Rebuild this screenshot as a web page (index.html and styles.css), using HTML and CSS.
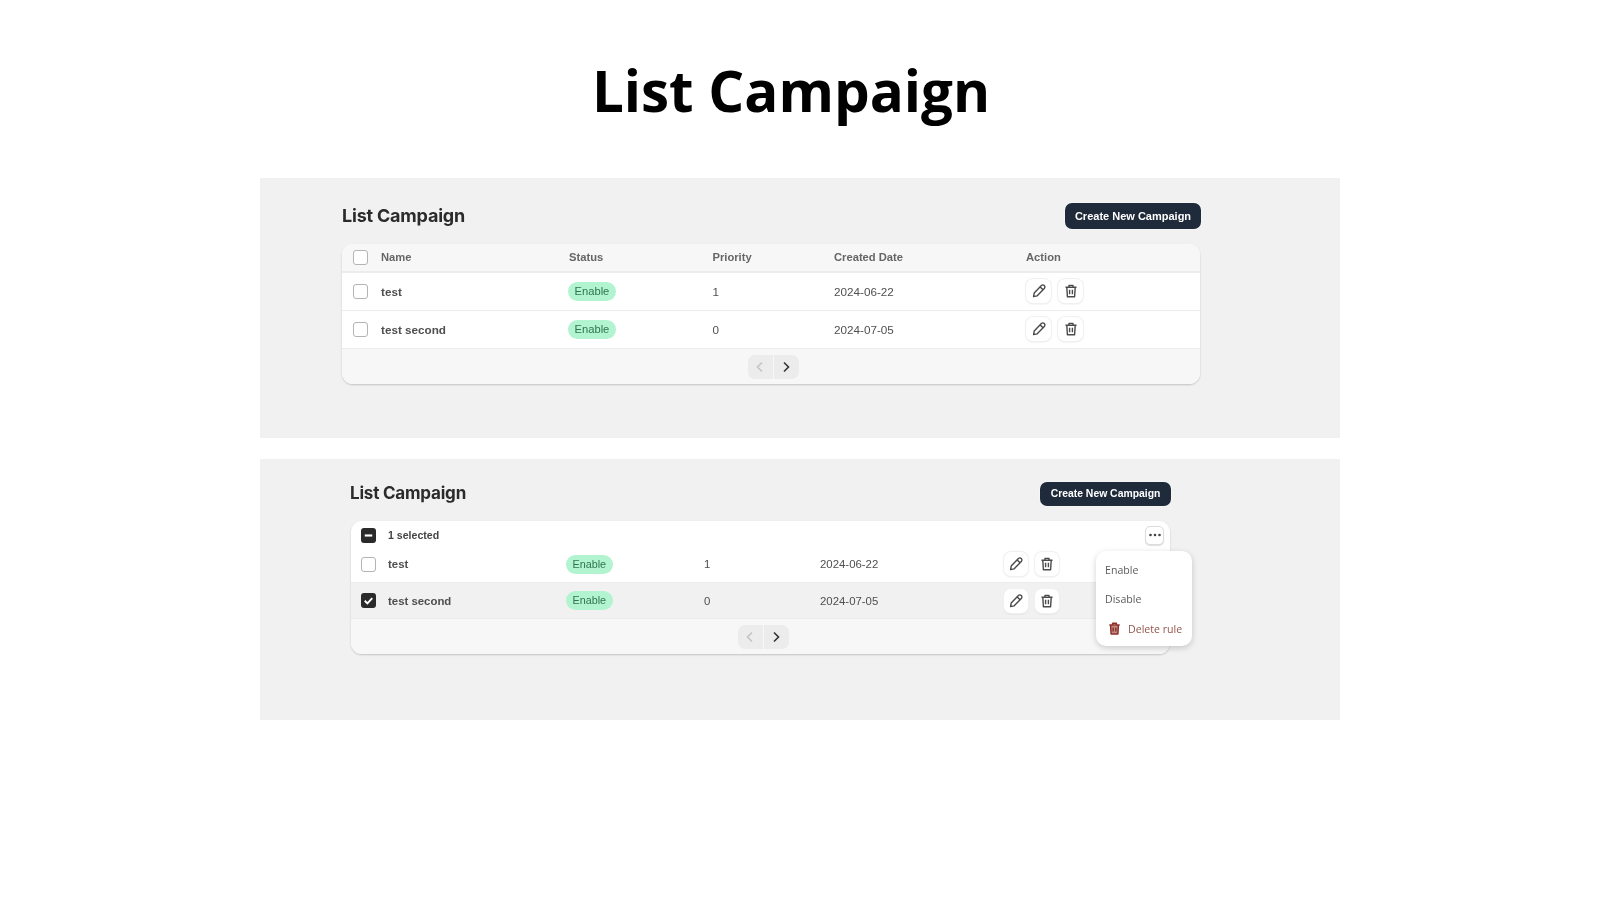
FILE: index.html
```html
<!DOCTYPE html>
<html lang="en">
<head>
<meta charset="utf-8">
<title>List Campaign</title>
<link rel="stylesheet" href="styles.css">
</head>
<body>
<svg class="defs" width="0" height="0" aria-hidden="true">
  <symbol id="i-edit" viewBox="0 0 16 16"><path d="M10.400 2.600a1.900 1.900 0 0 1 2.900 2.900L6 12.900l-3.400.7.6-3.500z M9.200 3.900l2.800 2.800" fill="none" stroke="currentColor" stroke-width="1.400" stroke-linejoin="round"/></symbol>
  <symbol id="i-trash" viewBox="0 0 16 16"><path d="M2.500 4.200h11 M6 4V2.400h4V4 M3.800 4.400l.6 9.400h7.200l.6-9.400 M6.600 6.800v4.400 M9.400 6.800v4.400" fill="none" stroke="currentColor" stroke-width="1.400" stroke-linejoin="round"/></symbol>
  <symbol id="i-trash-solid" viewBox="0 0 16 16"><path d="M3.800 4.400l.6 9.400h7.200l.6-9.400z" fill="currentColor" fill-opacity=".55"/><path d="M2.500 4.200h11 M6 4V2.400h4V4 M3.800 4.400l.6 9.400h7.200l.6-9.400 M6.600 6.800v4.400 M9.400 6.800v4.400" fill="none" stroke="currentColor" stroke-width="1.600" stroke-linejoin="round"/></symbol>
  <symbol id="i-left" viewBox="0 0 16 16"><path d="M10 3.500 5.500 8l4.500 4.500" fill="none" stroke="currentColor" stroke-width="1.600"/></symbol>
  <symbol id="i-right" viewBox="0 0 16 16"><path d="M6 3.500 10.500 8 6 12.500" fill="none" stroke="currentColor" stroke-width="1.600"/></symbol>
  <symbol id="i-dots" viewBox="0 0 16 16"><circle cx="3.500" cy="8" r="1.300" fill="currentColor"/><circle cx="8" cy="8" r="1.300" fill="currentColor"/><circle cx="12.500" cy="8" r="1.300" fill="currentColor"/></symbol>
</svg>
<main class="page">
  <h1 class="title">List Campaign</h1>

  <section class="panel panel-a">
    <div class="head">
      <h2 class="head-title">List Campaign</h2>
      <button class="primary">Create New Campaign</button>
    </div>
    <div class="card">
      <div class="row row-head">
        <span class="check"></span><span>Name</span><span>Status</span><span>Priority</span><span>Created Date</span><span>Action</span>
      </div>
      <div class="row row-body">
        <span class="check"></span><span class="name">test</span><span><span class="pill">Enable</span></span><span>1</span><span>2024-06-22</span>
        <span class="actions"><button class="icon-btn"><svg class="ico"><use href="#i-edit"/></svg></button><button class="icon-btn"><svg class="ico"><use href="#i-trash"/></svg></button></span>
      </div>
      <div class="row row-body">
        <span class="check"></span><span class="name">test second</span><span><span class="pill">Enable</span></span><span>0</span><span>2024-07-05</span>
        <span class="actions"><button class="icon-btn"><svg class="ico"><use href="#i-edit"/></svg></button><button class="icon-btn"><svg class="ico"><use href="#i-trash"/></svg></button></span>
      </div>
      <div class="foot">
        <div class="pager"><span class="page-btn off"><svg class="ico"><use href="#i-left"/></svg></span><span class="page-btn"><svg class="ico"><use href="#i-right"/></svg></span></div>
      </div>
    </div>
  </section>

  <section class="panel panel-b">
    <div class="head">
      <h2 class="head-title">List Campaign</h2>
      <button class="primary">Create New Campaign</button>
    </div>
    <div class="card">
      <div class="row row-sel">
        <span class="check on"><svg viewBox="0 0 14 14"><path d="M3.500 7h7" stroke="#fff" stroke-width="2"/></svg></span>
        <span class="sel-label">1 selected</span>
        <button class="dots"><svg class="ico"><use href="#i-dots"/></svg></button>
      </div>
      <div class="row row-body">
        <span class="check"></span><span class="name">test</span><span><span class="pill">Enable</span></span><span>1</span><span>2024-06-22</span>
        <span class="actions"><button class="icon-btn"><svg class="ico"><use href="#i-edit"/></svg></button><button class="icon-btn"><svg class="ico"><use href="#i-trash"/></svg></button></span>
      </div>
      <div class="row row-body active">
        <span class="check on"><svg viewBox="0 0 14 14"><path d="M3.500 7.200l2.500 2.500 4.500-5" fill="none" stroke="#fff" stroke-width="1.800"/></svg></span><span class="name">test second</span><span><span class="pill">Enable</span></span><span>0</span><span>2024-07-05</span>
        <span class="actions"><button class="icon-btn"><svg class="ico"><use href="#i-edit"/></svg></button><button class="icon-btn"><svg class="ico"><use href="#i-trash"/></svg></button></span>
      </div>
      <div class="foot">
        <div class="pager"><span class="page-btn off"><svg class="ico"><use href="#i-left"/></svg></span><span class="page-btn"><svg class="ico"><use href="#i-right"/></svg></span></div>
      </div>
      <div class="menu">
        <div class="menu-item">Enable</div>
        <div class="menu-item">Disable</div>
        <div class="menu-item danger"><svg class="menu-ico"><use href="#i-trash-solid"/></svg>Delete rule</div>
      </div>
    </div>
  </section>
</main>
</body>
</html>
```
FILE: styles.css
```css
* { box-sizing: border-box; }
html, body { margin: 0; padding: 0; background: #fff; }
body { width: 1600px; height: 900px; overflow: hidden; font-family: "Liberation Sans", Arial, sans-serif; color: #4f4f4f; }
.defs { position: absolute; }
.page { display: flex; flex-direction: column; padding-left: 260px; width: 1340px; }
.title { margin: 0; height: 178px; padding-top: 50px; text-align: center; width: 1062px; font-family: "Open Sans", sans-serif; font-weight: 700; font-size: 56.500px; line-height: 82px; color: #000; }
.panel { width: 1080px; background: #f1f1f1; height: 260px; }
.panel-a { padding: 19px 0 0 82px; }
.panel-b { margin-top: 21px; padding: 20px 0 0 91px; height: 261px; }
.head, .card { filter: blur(.3px); }
.head { display: flex; justify-content: space-between; align-items: center; font-family: Inter, sans-serif; }
.panel-a .head { width: 859px; height: 33px; margin-bottom: 14px; padding-top: 5px; }
.panel-b .head { width: 820px; height: 29px; margin-bottom: 13px; }
.head-title { margin: 0 0 2px; font-size: 18px; font-weight: 700; color: #2b2b2b; letter-spacing: -0.2px; }
.panel-b .head-title { font-size: 17px; margin-left: -1px; }
.primary { border: 0; background: #1f2a3a; color: #fff; font: 700 11px "Liberation Sans", sans-serif; border-radius: 7px; height: 26px; width: 136px; padding: 0; box-shadow: 0 0 0 1px #fff6; }
.panel-b .primary { width: 131px; height: 24px; font-size: 10.400px; }
.card { position: relative; background: #fff; border-radius: 11px; box-shadow: 0 1px 2px #0003; }
.panel-a .card { width: 858px; }
.panel-b .card { width: 819px; }
.row { display: grid; align-items: center; font-size: 11.700px; padding-left: 11px; }
.panel-a .row { grid-template-columns: 28px 188px 143.500px 121.500px 192px 1fr; padding-bottom: 1px; }
.panel-b .row { grid-template-columns: 27px 180px 136px 116px 184px 1fr; padding-left: 10px; font-size: 11.400px; }
.row-head { height: 29px; background: #f7f7f7; border-radius: 11px 11px 0 0; border-bottom: 2px solid #ececec; font-weight: 700; font-size: 11.200px; color: #666; }
.row-body { border-bottom: 1px solid #ececec; }
.panel-a .row-body { height: 38px; }
.panel-b .row-body { height: 36px; }
.panel-b .row-sel + .row-body { height: 34px; padding-bottom: 3px; }
.active { background: #f1f1f1; }
.name { font-weight: 700; color: #4f4f4f; }
.check { width: 15px; height: 15px; border: 1px solid #b4b4b4; border-radius: 3px; background: #fff; display: block; }
.check.on { border: 0; background: #2a2a2a; }
.check svg { display: block; width: 15px; height: 15px; }
.pill { display: inline-block; background: #b2f4d0; color: #2f7352; font-size: 11.200px; line-height: 19px; height: 19px; border-radius: 10px; padding: 0 7px; margin-left: -1.500px; }
.panel-b .pill { padding: 0 6.500px; font-size: 10.800px; margin-left: -2px; }
.actions { display: flex; gap: 7px; }
.icon-btn { width: 25px; height: 24px; padding: 0; border: 0; background: #fff; border-radius: 7px; color: #4a4a4a; display: flex; align-items: center; justify-content: center; box-shadow: 0 0 0 1px #f0f0f0, 0 1px 2px #0002; }
.panel-b .icon-btn { width: 24px; }
.ico { width: 16px; height: 16px; }
.foot { display: flex; justify-content: center; align-items: center; background: #f7f7f7; border-radius: 0 0 11px 11px; }
.panel-a .foot { height: 35px; padding-left: 4px; }
.panel-b .foot { height: 35px; padding-left: 5px; }
.pager { display: flex; gap: 1px; }
.page-btn { width: 25px; height: 24px; background: #ececec; display: flex; align-items: center; justify-content: center; color: #333; border-radius: 0 7px 7px 0; }
.page-btn.off { color: #c4c4c4; border-radius: 7px 0 0 7px; }
.row-sel { height: 28px; grid-template-columns: 27px 1fr auto !important; padding-right: 6px; border-radius: 11px 11px 0 0; }
.sel-label { font-weight: 700; font-size: 10.600px; color: #444; }
.dots { width: 19px; height: 19px; padding: 0; border: 1px solid #dcdcdc; background: #fff; border-radius: 5px; color: #444; display: flex; align-items: center; justify-content: center; box-shadow: 0 1px 1px #0002; }
.menu { position: absolute; left: 745px; top: 30px; width: 96px; height: 95px; background: #fff; border-radius: 10px; box-shadow: 0 2px 6px #0000002e; padding: 4px 0 0 9px; font: 10.600px "Open Sans", sans-serif; color: #5c5c5c; }
.menu-item { height: 29.500px; display: flex; align-items: center; }
.danger { color: #94554c; padding-left: 2px; }
.menu-ico { width: 15px; height: 15px; margin-right: 6px; color: #8f2f28; }
```
